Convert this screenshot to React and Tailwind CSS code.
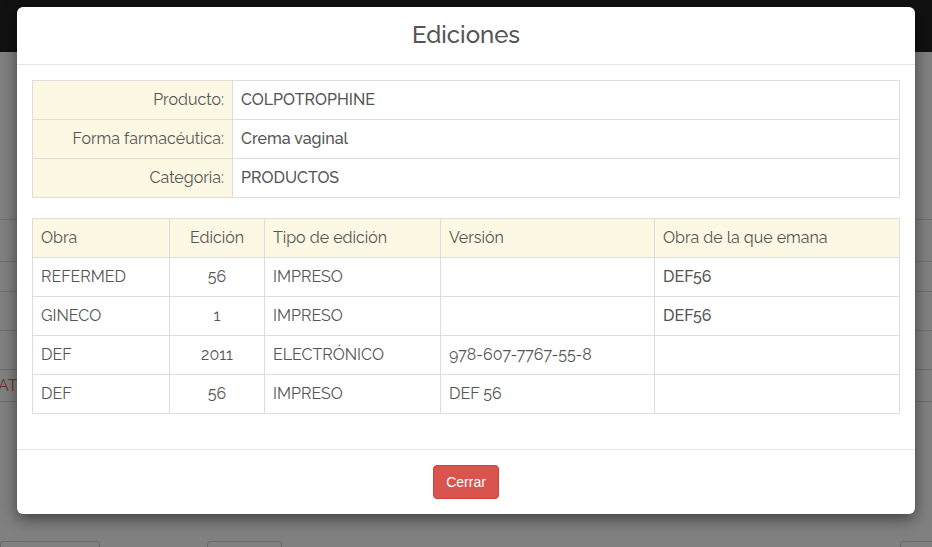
import React from "react";

const FONT = { fontFamily: "Raleway, Lato, 'Open Sans', sans-serif" };

const info = [
  ["Producto:", "COLPOTROPHINE"],
  ["Forma farmacéutica:", "Crema vaginal"],
  ["Categoria:", "PRODUCTOS"],
];

const rows = [
  ["REFERMED", "56", "IMPRESO", "", "DEF56"],
  ["GINECO", "1", "IMPRESO", "", "DEF56"],
  ["DEF", "2011", "ELECTRÓNICO", "978-607-7767-55-8", ""],
  ["DEF", "56", "IMPRESO", "DEF 56", ""],
];

function Backdrop() {
  // página de fondo atenuada por el modal
  return (
    <div className="flex flex-col h-full">
      <div className="h-[52px] bg-[#111111]" />
      <div className="flex-1 flex flex-col bg-[#808080]">
        <div className="h-[168px] border-b border-[#6f6f6f]" />
        <div className="h-[42px] border-b border-[#6f6f6f]" />
        <div className="h-[30px] border-b border-[#6f6f6f]" />
        <div className="h-[39px] border-b border-[#6f6f6f]" />
        <div className="h-[39px] border-b border-[#6f6f6f]" />
        <div className="h-[32px] border-b border-[#6f6f6f] flex items-center">
          <span className="text-[#7a2a2a] text-[16px] leading-none -ml-[2px]">ATC</span>
        </div>
        <div className="flex-1 flex items-end">
          <div className="w-[100px] h-[6px] border border-b-0 border-[#6a6a6a] rounded-t" />
          <div className="ml-[107px] w-[75px] h-[6px] border border-b-0 border-[#6a6a6a] rounded-t" />
          <div className="ml-auto w-[32px] h-[6px] border border-r-0 border-b-0 border-[#6a6a6a] rounded-tl" />
        </div>
      </div>
    </div>
  );
}

export default function App() {
  return (
    <div className="relative w-full h-[547px] overflow-hidden" style={FONT}>
      <Backdrop />
      <div className="absolute left-[17px] top-[7px] w-[898px] bg-white rounded-md shadow-[0_5px_15px_rgba(0,0,0,0.5)] text-[#555555]">
        <div className="h-[58px] border-b border-[#e5e5e5] flex items-center justify-center">
          <h4 className="text-[24px] font-medium text-[#555555] leading-none pb-[2px]">Ediciones</h4>
        </div>

        <div className="p-[15px]">
          <table className="w-full border-collapse text-[16px]">
            <tbody>
              {info.map(([k, v]) => (
                <tr key={k} className="h-[39px]">
                  <td className="w-[200px] border border-[#dddddd] bg-[#fcf8e3] text-right px-2">{k}</td>
                  <td className="border border-[#dddddd] px-2 font-medium">{v}</td>
                </tr>
              ))}
            </tbody>
          </table>

          <table className="w-full border-collapse text-[16px] mt-5 mb-5">
            <thead>
              <tr className="h-[39px] bg-[#fcf8e3]">
                <th className="w-[137px] border border-[#dddddd] px-2 text-left font-normal">Obra</th>
                <th className="w-[95px] border border-[#dddddd] px-2 text-center font-normal">Edición</th>
                <th className="w-[176px] border border-[#dddddd] px-2 text-left font-normal">Tipo de edición</th>
                <th className="w-[214px] border border-[#dddddd] px-2 text-left font-normal">Versión</th>
                <th className="border border-[#dddddd] px-2 text-left font-normal">Obra de la que emana</th>
              </tr>
            </thead>
            <tbody>
              {rows.map((r, i) => (
                <tr key={i} className="h-[39px]">
                  <td className="border border-[#dddddd] px-2">{r[0]}</td>
                  <td className="border border-[#dddddd] px-2 text-center">{r[1]}</td>
                  <td className="border border-[#dddddd] px-2">{r[2]}</td>
                  <td className="border border-[#dddddd] px-2">{r[3]}</td>
                  <td className="border border-[#dddddd] px-2 font-medium">{r[4]}</td>
                </tr>
              ))}
            </tbody>
          </table>
        </div>

        <div className="border-t border-[#e5e5e5] h-[65px] flex items-center justify-center">
          <button
            className="h-[34px] px-3 rounded bg-[#d9534f] border border-[#d43f3a] text-white text-[14px]"
            style={{ fontFamily: "'Liberation Sans', Arial, sans-serif" }}
          >
            Cerrar
          </button>
        </div>
      </div>
    </div>
  );
}
